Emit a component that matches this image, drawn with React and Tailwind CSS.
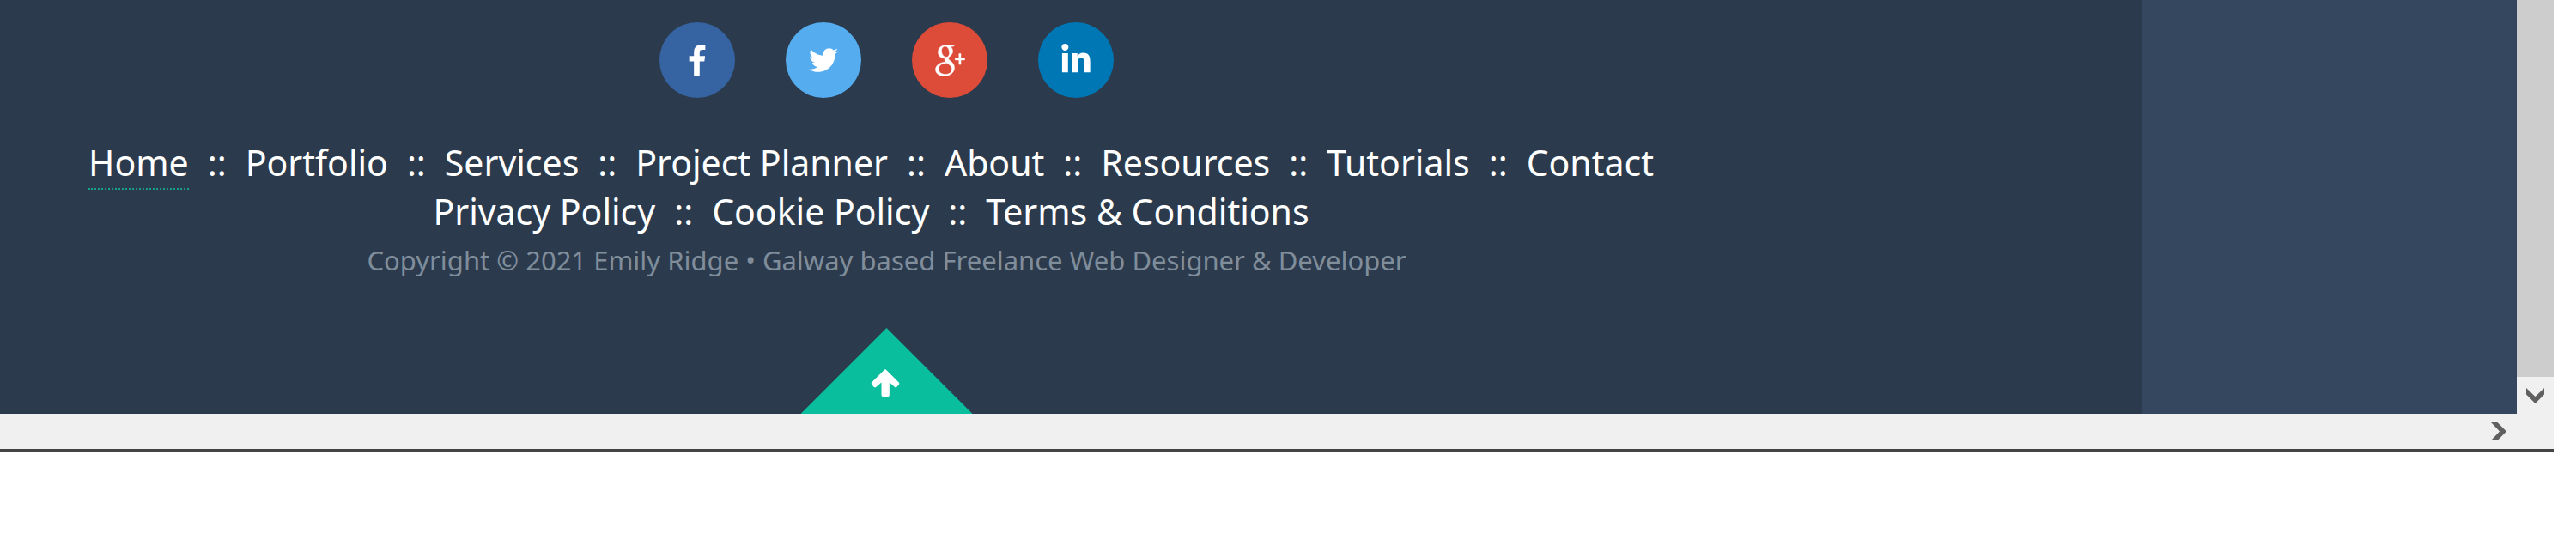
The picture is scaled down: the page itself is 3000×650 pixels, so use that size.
import { FaTwitter, FaLinkedinIn } from "react-icons/fa";

function FacebookIcon() {
  return (
    <svg viewBox="479 0 864 1664" className="h-9 w-5" fill="currentColor" aria-hidden="true">
      <path d="M1343 12v264h-157q-86 0-116 36t-30 108v189h293l-39 296h-254v759h-306v-759h-255v-296h255v-218q0-186 104-288.5t277-102.5q147 0 228 12z" />
    </svg>
  );
}

function GooglePlusIcon() {
  return (
    <svg
      viewBox="-0.5 -0.5 35 37"
      className="h-[37px] w-[35px]"
      fill="currentColor"
      stroke="currentColor"
      strokeWidth="0.5"
      aria-hidden="true"
    >
      <path
        fillRule="evenodd"
        d="M23 0H12.5C6.500 0 3 4 3 8.300C3 12.500 6.200 15.500 10.800 15.500C10.300 16.800 10.600 18.200 12 19.700C5 20 0 23.500 0 28.500C0 33 4.200 36 10 36C17.500 36 22 31.500 22 26.500C22 22.500 20 20.500 17.500 18.500C15.500 17 15 16.500 15 15.500C15 14.300 16 13.700 17.200 12.700C19 11.200 20 9.500 20 7.300C20 4.700 18.900 3 17.300 1.700H20.200ZM11.200 1.500C14.200 1.500 16.200 5.600 16.200 9.300C16.200 12.500 14.500 14 12.300 14C9.200 14 7 10.200 7 6.500C7 3.500 8.700 1.500 11.200 1.500ZM13.500 21C17.500 23.800 19 25.200 19 28C19 31.700 16.200 34 11.500 34C6.800 34 3.600 31.600 3.600 27.800C3.600 23 8.800 21 13.500 21Z"
      />
      <path d="M27.300 10h2.200v5.200H34v2.200h-4.500V22.600h-2.200V17.400H22.800v-2.200h4.500z" />
    </svg>
  );
}

const socials = [
  { name: "Facebook", color: "bg-[#3664a2]", icon: <FacebookIcon /> },
  { name: "Twitter", color: "bg-[#55acee]", icon: <FaTwitter className="size-[34px]" /> },
  { name: "Google Plus", color: "bg-[#dd4b39]", icon: <GooglePlusIcon /> },
  { name: "LinkedIn", color: "bg-[#0077b5]", icon: <FaLinkedinIn className="size-[38px]" /> },
];

const mainLinks = ["Home", "Portfolio", "Services", "Project Planner", "About", "Resources", "Tutorials", "Contact"];
const legalLinks = ["Privacy Policy", "Cookie Policy", "Terms & Conditions"];

function LinkRow({ links, current }) {
  return (
    <ul className="flex h-[57px] items-start justify-center">
      {links.map((label, i) => (
        <li key={label} className="flex">
          {i > 0 && <span className="mx-[22px]">::</span>}
          <a
            href="#"
            className={
              label === current
                ? "border-b-2 border-dotted border-[#16a08c] pb-0.5"
                : "border-b-2 border-transparent pb-0.5"
            }
          >
            {label}
          </a>
        </li>
      ))}
    </ul>
  );
}

export default function App() {
  return (
    <div className="bg-white pr-[26px] font-['Noto_Sans','Open_Sans',sans-serif]">
      <div className="flex">
        <div className="flex min-w-0 flex-1">
          <footer className="min-w-0 flex-1 bg-[#2b3b4d]">
            <div className="flex max-w-[2065px] flex-col items-center pt-[26px]">
              <ul className="flex gap-[59px]">
                {socials.map((s) => (
                  <li key={s.name}>
                    <a
                      href="#"
                      aria-label={s.name}
                      className={`flex size-[88px] items-center justify-center rounded-full text-white ${s.color}`}
                    >
                      {s.icon}
                    </a>
                  </li>
                ))}
              </ul>
              <nav className="mt-12 pr-9 text-[41px] leading-[55px] whitespace-nowrap text-white">
                <LinkRow links={mainLinks} current="Home" />
                <LinkRow links={legalLinks} />
              </nav>
              <p className="mt-0.5 text-[31px] leading-[50px] whitespace-nowrap text-[#808d9b]">
                Copyright © 2021 Emily Ridge • Galway based Freelance Web Designer &amp; Developer
              </p>
              <a
                href="#"
                aria-label="Back to top"
                className="mt-[54px] flex h-[100px] w-[200px] items-start justify-center bg-[#09be9d] pt-12 pr-1 text-white [clip-path:polygon(50%_0,100%_100%,0_100%)]"
              >
                <svg viewBox="0 0 100 96" className="h-8 w-[34px]" aria-hidden="true">
                  <path
                    d="M50 8L92 50L86 57L58 32V90H43V32L14 57L8 50Z"
                    fill="currentColor"
                    stroke="currentColor"
                    strokeWidth="13"
                    strokeLinejoin="round"
                  />
                </svg>
              </a>
            </div>
          </footer>
          <div className="w-[436px] bg-[#34475e]" />
        </div>
        <div className="flex w-[43px] flex-col bg-[#f0f0f0]">
          <div className="flex-1 bg-[#cdcdcd]" />
          <button aria-label="Scroll down" className="flex h-[43px] items-center justify-center text-[#606060]">
            <svg viewBox="0 0 21 18" className="h-[18px] w-[21px]" fill="currentColor" aria-hidden="true">
              <path d="M0 0L10.500 10L21 0V7.500L10.500 18L0 7.500Z" />
            </svg>
          </button>
        </div>
      </div>
      <div className="flex h-11 justify-end border-b-3 border-[#444] bg-[#f0f0f0] pr-[43px]">
        <button aria-label="Scroll right" className="flex w-[43px] items-center justify-center text-[#606060]">
          <svg viewBox="0 0 18 21" className="h-[21px] w-[18px]" fill="currentColor" aria-hidden="true">
            <path d="M0 0H7.500L18 10.500L7.500 21H0L10 10.500Z" />
          </svg>
        </button>
      </div>
    </div>
  );
}
